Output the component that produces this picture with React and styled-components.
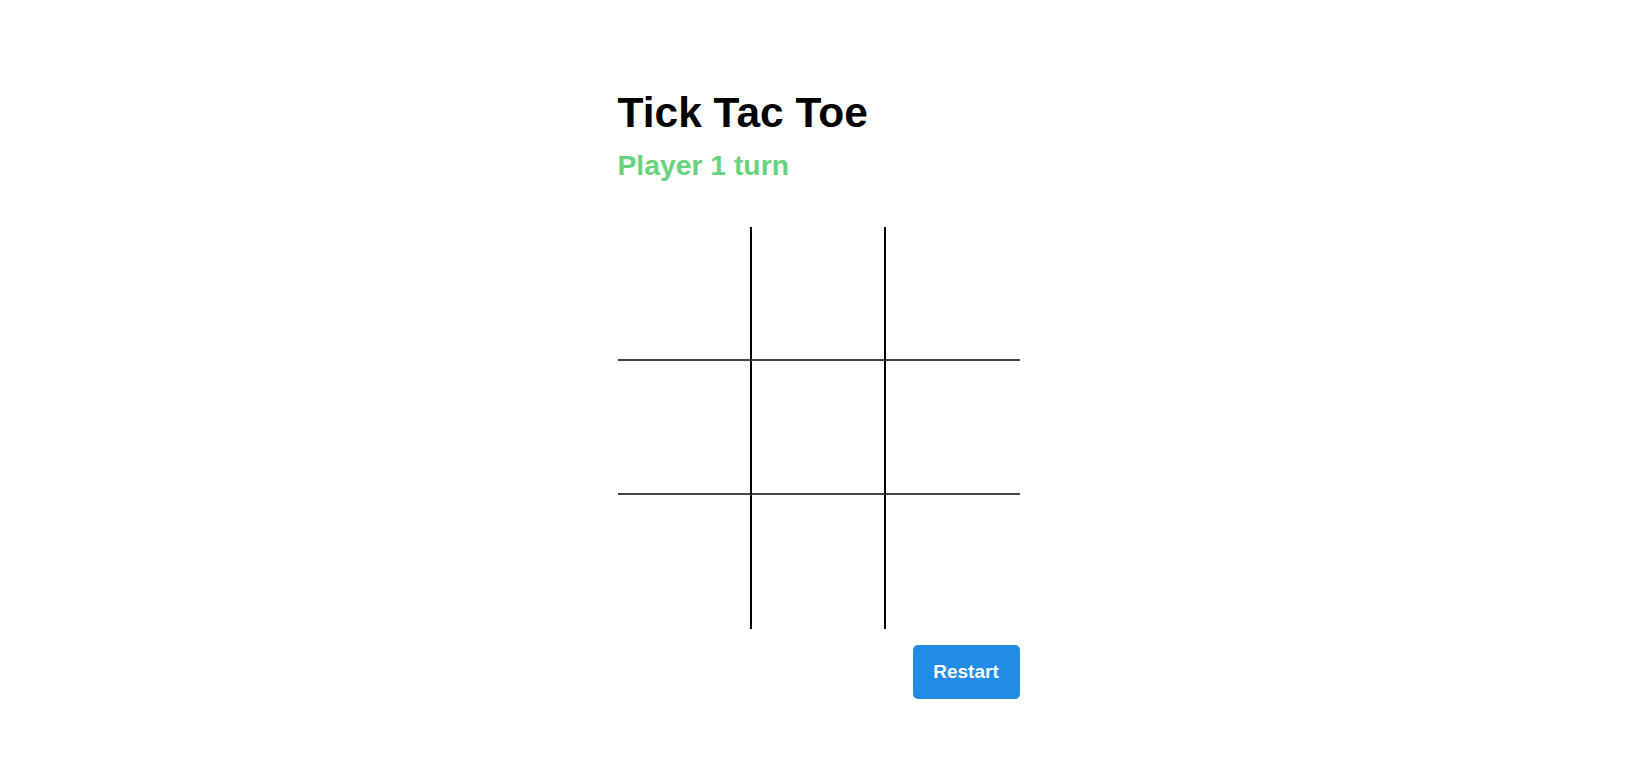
import React, { useState } from "react";
import styled, { createGlobalStyle } from "styled-components";

const GlobalStyle = createGlobalStyle`
  html, body {
    margin: 0;
    padding: 0;
    background: #ffffff;
  }
  body {
    font-family: "Liberation Sans", Arial, sans-serif;
  }
`;

const Page = styled.main`
  display: flex;
  justify-content: center;
  padding-top: 89px;
`;

const Game = styled.section`
  width: 402px;
  display: flex;
  flex-direction: column;
`;

const Title = styled.h1`
  margin: 0;
  font-size: 42.5px;
  line-height: 48px;
  font-weight: 700;
  color: #000000;
`;

const Status = styled.h2`
  margin: 12px 0 0 0;
  font-size: 28.3px;
  line-height: 32px;
  font-weight: 700;
  color: #69d27c;
`;

const Board = styled.div`
  margin-top: 46px;
  display: grid;
  grid-template-columns: repeat(3, 134px);
  grid-template-rows: repeat(3, 134px);
`;

const Cell = styled.button`
  box-sizing: border-box;
  margin: 0;
  padding: 0;
  background: transparent;
  border: none;
  border-right: ${(p) => (p.$col < 2 ? "2px solid #000" : "none")};
  border-bottom: ${(p) => (p.$row < 2 ? "2px solid #444" : "none")};
  font-family: "Liberation Sans", Arial, sans-serif;
  font-size: 64px;
  font-weight: 700;
  cursor: pointer;
  outline: none;
`;

const Actions = styled.div`
  display: flex;
  justify-content: flex-end;
  margin-top: 16px;
`;

const RestartButton = styled.button`
  width: 107px;
  height: 54px;
  border: none;
  border-radius: 5px;
  background: #228be6;
  color: #ffffff;
  font-family: "Liberation Sans", Arial, sans-serif;
  font-size: 19px;
  font-weight: 700;
  cursor: pointer;
`;

export default function App() {
  const [cells, setCells] = useState(Array(9).fill(""));
  const [player, setPlayer] = useState(1);

  const play = (i) => {
    if (cells[i]) return;
    const next = cells.slice();
    next[i] = player === 1 ? "X" : "O";
    setCells(next);
    setPlayer(player === 1 ? 2 : 1);
  };

  const restart = () => {
    setCells(Array(9).fill(""));
    setPlayer(1);
  };

  return (
    <>
      <GlobalStyle />
      <Page>
        <Game>
          <Title>Tick Tac Toe</Title>
          <Status>Player {player} turn</Status>
          <Board>
            {cells.map((v, i) => (
              <Cell
                key={i}
                $row={Math.floor(i / 3)}
                $col={i % 3}
                onClick={() => play(i)}
              >
                {v}
              </Cell>
            ))}
          </Board>
          <Actions>
            <RestartButton onClick={restart}>Restart</RestartButton>
          </Actions>
        </Game>
      </Page>
    </>
  );
}
